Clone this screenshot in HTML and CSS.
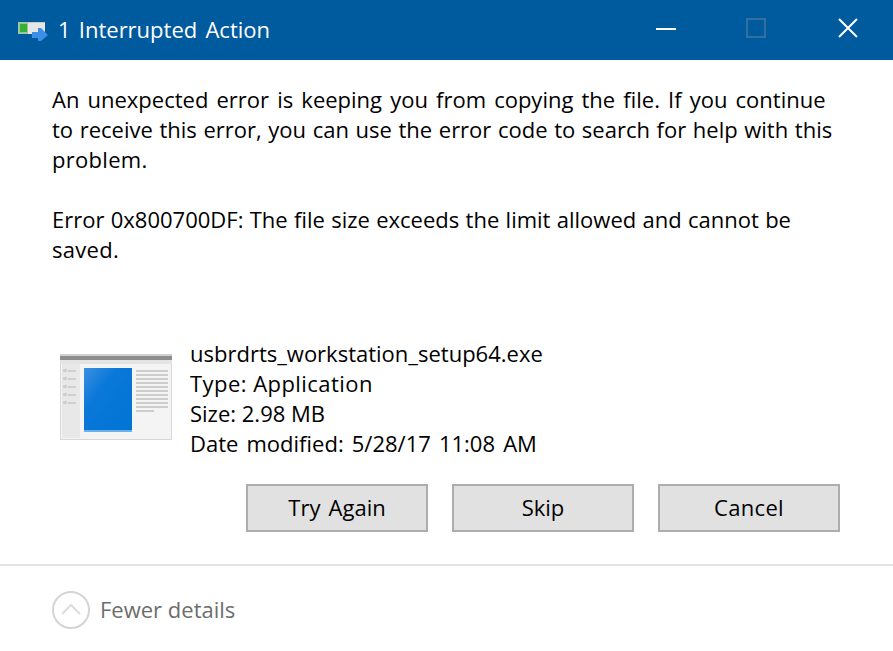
FILE: index.html
```html
<!DOCTYPE html>
<html lang="en">
<head>
<meta charset="utf-8">
<title>1 Interrupted Action</title>
<link rel="stylesheet" href="styles.css">
</head>
<body>
<div class="window">
  <header class="titlebar">
    <svg class="app-icon" width="30" height="22" viewBox="0 0 30 22">
      <rect x="0" y="3" width="27" height="12" fill="#e6e6e6"/>
      <rect x="0" y="3" width="27" height="1" fill="#c8c8c8"/>
      <rect x="0" y="3" width="10" height="12" fill="#9fc79f"/>
      <rect x="2" y="5" width="7" height="8" fill="#35b035"/>
      <path d="M14 13h6v-4h3l7 7-7 6h-3v-3h-6z" fill="#3b8fe6"/>
    </svg>
    <span class="title">1 Interrupted Action</span>
    <div class="controls">
      <span class="ctl"><svg width="20" height="20" viewBox="0 0 20 20"><rect y="10" width="20" height="2" fill="#fff"/></svg></span>
      <span class="ctl ctl-max"><svg width="20" height="20" viewBox="0 0 20 20"><rect x="1" y="1" width="18" height="18" fill="none" stroke="#336f9f" stroke-width="2"/></svg></span>
      <span class="ctl"><svg width="20" height="20" viewBox="0 0 20 20"><path d="M1 1l18 18M19 1L1 19" stroke="#fff" stroke-width="2"/></svg></span>
    </div>
  </header>
  <main class="content">
    <div class="msg">
      <div class="ws-wide">An unexpected error is keeping you from copying the file. If you continue</div>
      <div class="ws-mid">to receive this error, you can use the error code to search for help with this</div>
      <div class="ls-small">problem.</div>
    </div>
    <div class="msg err">
      <div class="ws-small">Error 0x800700DF: The file size exceeds the limit allowed and cannot be</div>
      <div class="ls-small">saved.</div>
    </div>
    <div class="file">
      <svg class="file-icon" width="112" height="86" viewBox="0 0 112 86">
        <rect width="112" height="86" fill="#f4f4f4"/>
        <rect width="112" height="86" fill="none" stroke="#d8d8d8" stroke-width="2"/>
        <rect width="112" height="2" fill="#d0d0d0"/>
        <rect y="2" width="112" height="4" fill="#8d8d8d"/>
        <rect y="6" width="112" height="4" fill="#e4e4e4"/>
        <rect x="2" y="10" width="18" height="74" fill="#e8e8e8"/>
        <g fill="#cfcfcf">
          <rect x="3" y="15" width="4" height="3"/><rect x="8" y="16" width="8" height="2"/>
          <rect x="3" y="23" width="4" height="3"/><rect x="8" y="24" width="8" height="2"/>
          <rect x="3" y="31" width="4" height="3"/><rect x="8" y="32" width="8" height="2"/>
          <rect x="3" y="39" width="4" height="3"/><rect x="8" y="40" width="8" height="2"/>
          <rect x="3" y="47" width="4" height="3"/><rect x="8" y="48" width="8" height="2"/>
        </g>
        <defs>
          <linearGradient id="pane" x1="0" y1="0" x2="1" y2="1">
            <stop offset="0" stop-color="#3b90e2"/>
            <stop offset=".35" stop-color="#0a78d8"/>
            <stop offset="1" stop-color="#0074d4"/>
          </linearGradient>
        </defs>
        <rect x="24" y="14" width="48" height="62" fill="url(#pane)"/>
        <rect x="24" y="76" width="48" height="2" fill="#6db1ea"/>
        <g fill="#cdcdcd">
          <rect x="76" y="16" width="32" height="2"/><rect x="76" y="20" width="32" height="2"/>
          <rect x="76" y="24" width="32" height="2"/><rect x="76" y="28" width="32" height="2"/>
          <rect x="76" y="32" width="32" height="2"/><rect x="76" y="36" width="32" height="2"/>
          <rect x="76" y="40" width="32" height="2"/><rect x="76" y="44" width="32" height="2"/>
          <rect x="76" y="48" width="32" height="2"/><rect x="76" y="52" width="32" height="2"/>
          <rect x="76" y="56" width="18" height="2"/>
        </g>
      </svg>
      <div class="file-info">
        <div>usbrdrts_workstation_setup64.exe</div>
        <div class="ls-type">Type: Application</div>
        <div>Size: 2.98 MB</div>
        <div class="ws-wide">Date modified: 5/28/17 11:08 AM</div>
      </div>
    </div>
    <div class="buttons">
      <button class="btn ws-wide" type="button">Try Again</button>
      <button class="btn" type="button">Skip</button>
      <button class="btn ls-small" type="button">Cancel</button>
    </div>
  </main>
  <footer class="footer">
    <svg class="chev" width="38" height="38" viewBox="0 0 38 38">
      <circle cx="19" cy="19" r="18" fill="none" stroke="#d4d4d4" stroke-width="2"/>
      <path d="M10 23l9-9 9 9" fill="none" stroke="#dcdcdc" stroke-width="2"/>
    </svg>
    <span class="details">Fewer details</span>
  </footer>
</div>
</body>
</html>
```
FILE: styles.css
```css
html, body {
  margin: 0;
  padding: 0;
  background: #fff;
}
.window {
  width: 893px;
  height: 651px;
  display: flex;
  flex-direction: column;
  overflow: hidden;
  font-family: "Open Sans", "Noto Sans", sans-serif;
  font-size: 22px;
  line-height: 30px;
  color: #000;
}
.titlebar {
  height: 60px;
  flex: none;
  display: flex;
  align-items: center;
  padding-left: 18px;
  background: #005a9e;
  color: #fff;
}
.app-icon {
  flex: none;
  margin-right: 10px;
}
.title {
  flex: 1;
  padding-bottom: 2px;
  word-spacing: 2.5px;
}
.controls {
  display: flex;
  gap: 71px;
  padding: 0 35px 4px 0;
}
.ctl {
  display: flex;
  width: 20px;
  height: 20px;
}
.ctl-max {
  margin: 0 1px 0 -1px;
}
.content {
  flex: 1;
  display: flex;
  flex-direction: column;
  padding: 24px 53px 0 52px;
}
.msg {
  white-space: nowrap;
}
.err {
  margin-top: 30px;
}
.ws-wide {
  word-spacing: 2.4px;
}
.ws-mid {
  word-spacing: 0.9px;
}
.ws-small {
  word-spacing: 0.6px;
}
.ls-small {
  letter-spacing: 0.3px;
}
.ls-type {
  letter-spacing: 0.45px;
}
.file {
  display: flex;
  align-items: flex-start;
  margin-top: 74px;
  padding-left: 8px;
}
.file-icon {
  flex: none;
  margin-top: 16px;
  margin-right: 18px;
}
.file-info {
  white-space: nowrap;
}
.buttons {
  display: flex;
  justify-content: flex-end;
  gap: 24px;
  margin-top: 26px;
}
.btn {
  width: 182px;
  height: 48px;
  padding: 0 0 2px;
  border: 2px solid #adadad;
  border-radius: 0;
  background: #e1e1e1;
  color: #000;
  font: inherit;
}
.footer {
  flex: none;
  height: 87px;
  box-sizing: border-box;
  display: flex;
  align-items: center;
  gap: 10px;
  padding: 2px 0 0 52px;
  border-top: 2px solid #e3e3e3;
}
.chev {
  flex: none;
}
.details {
  padding-bottom: 2px;
  color: #6d6d6d;
}
```
